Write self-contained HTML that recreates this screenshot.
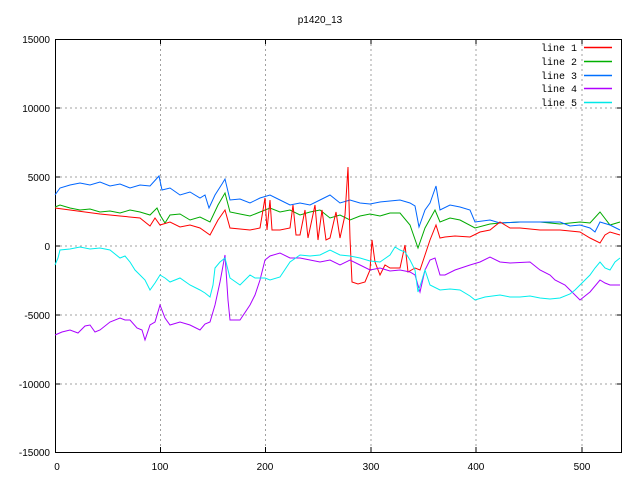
<!DOCTYPE html><html><head><style>body{margin:0;background:#fff}svg{display:block}</style></head><body>
<svg width="640" height="480" viewBox="0 0 640 480" xmlns="http://www.w3.org/2000/svg" font-family="Liberation Sans, sans-serif" font-size="10">
<g stroke="#a0a0a0" stroke-dasharray="2,3" stroke-width="1">
<line x1="55" y1="108" x2="622" y2="108"/><line x1="55" y1="177" x2="622" y2="177"/><line x1="55" y1="246" x2="622" y2="246"/><line x1="55" y1="315" x2="622" y2="315"/><line x1="55" y1="384" x2="622" y2="384"/>
<line x1="160.5" y1="39" x2="160.5" y2="452"/><line x1="265.5" y1="39" x2="265.5" y2="452"/><line x1="371" y1="39" x2="371" y2="452"/><line x1="476" y1="39" x2="476" y2="452"/><line x1="582" y1="39" x2="582" y2="452"/>
</g>
<rect x="55.5" y="39.5" width="566" height="413" fill="none" stroke="#000"/>
<g stroke="#000"><path d="M55 108h5M55 177h5M55 246h5M55 315h5M55 384h5M622 108h-5M622 177h-5M622 246h-5M622 315h-5M622 384h-5M160.5 452v-5M265.5 452v-5M371 452v-5M476 452v-5M582 452v-5M160.5 39v5M265.5 39v5M371 39v5M476 39v5M582 39v5"/></g>
<g text-anchor="end"><text x="50" y="43">15000</text><text x="50" y="112">10000</text><text x="50" y="181">5000</text><text x="50" y="250">0</text><text x="50" y="319">-5000</text><text x="50" y="388">-10000</text><text x="50" y="456">-15000</text></g>
<g text-anchor="middle"><text x="57" y="470">0</text><text x="160" y="470">100</text><text x="265" y="470">200</text><text x="371" y="470">300</text><text x="476" y="470">400</text><text x="582" y="470">500</text><text x="320" y="23">p1420_13</text></g>
<g text-anchor="end" font-family="Liberation Mono, monospace"><text x="577" y="51">line 1</text><text x="577" y="65">line 2</text><text x="577" y="79">line 3</text><text x="577" y="92">line 4</text><text x="577" y="106">line 5</text></g>
<g stroke-width="1.5" fill="none"><path d="M584 47.5h28" stroke="#ff0000"/><path d="M584 61.5h28" stroke="#00b000"/><path d="M584 75.5h28" stroke="#0070ff"/><path d="M584 88.5h28" stroke="#b000ff"/><path d="M584 102.5h28" stroke="#00e8e8"/></g>
<g fill="none" stroke-width="1">
<polyline stroke="#0a0" points="55,207 60,205 70,208 80,210 90,209 100,212 110,211 120,213 130,210 140,212 150,215 157,208 160,215 165,223 170,215 180,214 190,220 200,217 210,222 218,205 225,193 230,212 240,214 250,216 260,212 270,208 280,212 290,210 300,215 310,212 320,210 330,218 340,215 350,220 360,216 370,214 380,216 390,213 400,213 410,225 418,248 425,228 435,210 440,222 450,218 460,220 475,228 490,224 500,223 520,222 540,222 560,224 580,222 590,223 600,212 610,225 620,222"/>
<polyline stroke="#06f" points="55,195 60,188 70,185 80,183 90,185 100,182 110,186 120,184 130,188 140,185 150,186 159,176 162,190 170,188 180,195 190,192 200,198 205,195 209,208 215,195 222,184 225,179 230,200 240,199 250,203 260,198 270,195 280,200 290,205 300,203 310,205 320,200 330,195 340,203 350,200 360,203 370,204 380,202 390,201 400,200 410,203 415,206 419,227 425,210 430,203 436,186 440,210 450,205 460,207 470,210 475,222 490,220 500,223 520,222 540,222 560,222 570,226 580,225 590,228 595,232 600,222 610,225 620,230"/>
<polyline stroke="#f00" points="55,208 70,210 85,212 100,214 120,216 140,218 150,226 155,218 160,225 170,222 180,227 190,225 200,228 210,235 218,220 225,210 230,228 240,229 250,230 260,228 265,198 267,230 270,200 272,230 280,230 290,228 293,205 296,235 300,235 305,210 308,238 315,205 318,240 322,210 326,240 330,238 336,212 340,238 345,215 348,167 350,238 352,282 358,284 365,282 370,270 372,240 375,262 380,275 385,265 390,268 400,268 405,245 408,272 415,268 420,270 425,255 430,240 436,225 440,238 445,237 455,236 470,237 480,232 490,230 500,222 510,228 520,228 540,230 560,230 580,232 590,238 600,243 605,235 610,232 620,235"/>
<polyline stroke="#a0f" points="55,335 62,332 70,330 78,333 85,326 90,325 95,332 100,330 110,322 120,318 125,320 130,320 137,328 142,330 145,340 150,325 155,322 160,305 165,318 170,325 180,322 190,325 200,330 205,324 210,322 215,305 220,282 225,255 228,300 230,320 240,320 250,305 255,295 260,280 265,260 270,256 280,253 290,258 300,258 310,260 320,262 330,260 340,265 350,260 360,265 370,270 380,268 390,271 400,270 410,272 415,275 420,292 425,270 430,260 435,258 440,275 445,275 455,270 470,265 480,262 490,257 500,262 510,263 530,262 540,270 550,275 555,280 565,285 570,290 580,300 590,292 600,280 605,283 610,285 620,285"/>
<polyline stroke="#0ee" points="55,265 58,258 60,250 70,249 80,247 90,249 100,248 110,250 120,258 125,256 130,262 135,270 140,275 145,280 150,290 155,283 160,275 165,278 170,282 180,278 190,285 200,290 205,293 210,297 213,285 215,268 220,262 225,258 230,278 240,285 250,275 255,278 265,278 270,280 280,277 290,262 300,255 310,256 320,255 330,250 340,255 350,256 360,258 370,261 380,262 390,255 395,247 400,250 405,252 410,260 415,270 418,292 422,280 425,270 430,285 440,290 450,289 460,290 470,296 475,300 485,297 500,295 510,297 520,297 530,296 540,298 550,299 560,298 570,294 575,290 580,285 590,275 595,268 600,262 605,268 610,270 615,262 620,258"/>
</g>
</svg></body></html>
